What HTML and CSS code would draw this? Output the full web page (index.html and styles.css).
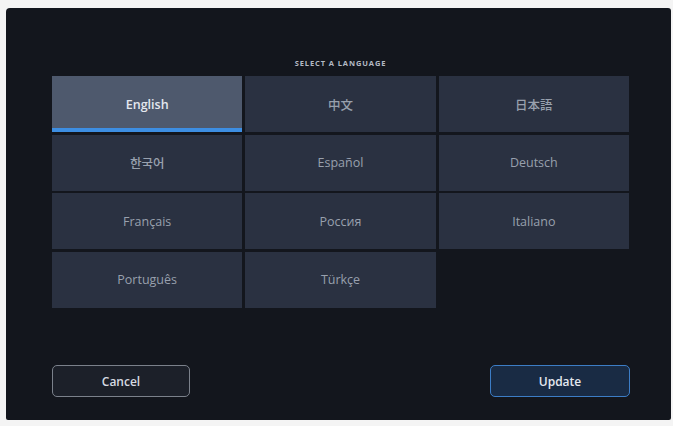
FILE: index.html
```html
<!DOCTYPE html>
<html lang="en">
<head>
    <meta charset="UTF-8">
    <meta name="viewport" content="width=device-width, initial-scale=1.0">
    <title>Select a Language</title>
    <link rel="stylesheet" href="styles.css">
</head>
<body>
    <div class="screen">
        <h1 class="title">Select a Language</h1>

        <div class="lang-grid">
            <button class="lang selected">English</button>
            <button class="lang">中文</button>
            <button class="lang">日本語</button>
            <button class="lang">한국어</button>
            <button class="lang">Español</button>
            <button class="lang">Deutsch</button>
            <button class="lang">Français</button>
            <button class="lang">Россия</button>
            <button class="lang">Italiano</button>
            <button class="lang">Português</button>
            <button class="lang">Türkçe</button>
        </div>

        <div class="actions">
            <button class="btn cancel">Cancel</button>
            <button class="btn update">Update</button>
        </div>
    </div>
</body>
</html>
```

FILE: styles.css
```css
body {
    margin: 0;
    background-color: #f4f4f4;
    font-family: 'Open Sans', 'Noto Sans', 'Noto Sans CJK KR', 'Noto Sans CJK JP', sans-serif;
}

.screen {
    margin: 8px 2px 6px 6px;
    height: 412px;
    box-sizing: border-box;
    padding: 0 42px 0 46px;
    background-color: #13161d;
    border-radius: 4px 3px 2px 2px;
    display: flex;
    flex-direction: column;
}

.title {
    margin: 50px 0 0;
    font-size: 7.5px;
    line-height: 10px;
    font-weight: 700;
    letter-spacing: 0.9px;
    text-transform: uppercase;
    text-align: center;
    color: #b4bac4;
}

.lang-grid {
    margin-top: 8px;
    display: grid;
    grid-template-columns: repeat(3, 1fr);
    grid-auto-rows: 56px;
    gap: 2.5px 3px;
}

.lang {
    border: none;
    padding: 0;
    background-color: #2a3141;
    color: #98a0ad;
    font-family: inherit;
    font-size: 12.5px;
    font-weight: 500;
}

.lang.selected {
    background-color: #4e596d;
    color: #e4e8ef;
    font-weight: 600;
    box-shadow: inset 0 -4px 0 #3d8ee2;
}

.actions {
    margin-top: auto;
    margin-bottom: 23px;
    display: flex;
    justify-content: space-between;
}

.btn {
    height: 32px;
    border-radius: 5px;
    font-family: inherit;
    font-size: 12px;
    font-weight: 600;
    color: #d6dae1;
}

.cancel {
    width: 138px;
    border: 1.5px solid #7b818b;
    background-color: #1c2029;
}

.update {
    width: 140px;
    margin-right: -1px;
    border: 1.5px solid #3c7dc6;
    background-color: #192b44;
    color: #e4e8ef;
}
```
